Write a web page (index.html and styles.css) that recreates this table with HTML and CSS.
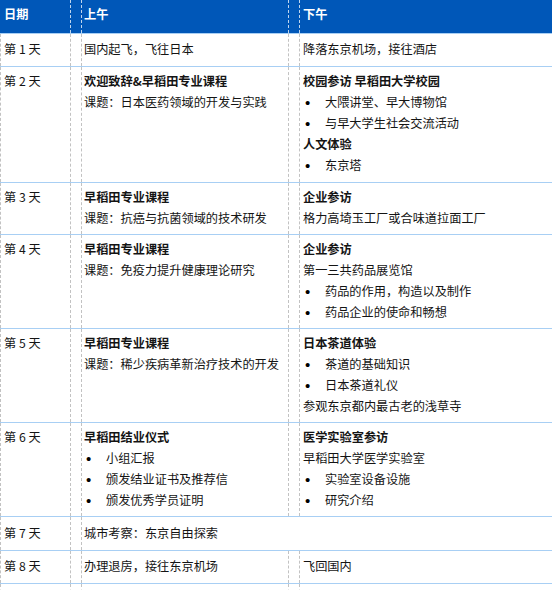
FILE: index.html
```html
<!DOCTYPE html>
<html lang="zh-CN">
<head>
<meta charset="utf-8">
<title>行程表</title>
<link rel="stylesheet" href="styles.css">
</head>
<body>
<div class="sheet">
  <div class="row head">
    <div class="c date">日期</div><div class="gap"></div><div class="c am">上午</div><div class="gap"></div><div class="c pm">下午</div>
  </div>

  <div class="row one">
    <div class="c date">第 1 天</div><div class="gap"></div>
    <div class="c am"><p>国内起飞，飞往日本</p></div><div class="gap"></div>
    <div class="c pm"><p>降落东京机场，接往酒店</p></div>
  </div>

  <div class="row">
    <div class="c date">第 2 天</div><div class="gap"></div>
    <div class="c am"><p class="t">欢迎致辞&amp;早稻田专业课程</p><p>课题：日本医药领域的开发与实践</p></div><div class="gap"></div>
    <div class="c pm">
      <p class="t">校园参访 早稻田大学校园</p>
      <ul><li>大隈讲堂、早大博物馆</li><li>与早大学生社会交流活动</li></ul>
      <p class="t">人文体验</p>
      <ul><li>东京塔</li></ul>
    </div>
  </div>

  <div class="row">
    <div class="c date">第 3 天</div><div class="gap"></div>
    <div class="c am"><p class="t">早稻田专业课程</p><p>课题：抗癌与抗菌领域的技术研发</p></div><div class="gap"></div>
    <div class="c pm"><p class="t">企业参访</p><p>格力高埼玉工厂或合味道拉面工厂</p></div>
  </div>

  <div class="row">
    <div class="c date">第 4 天</div><div class="gap"></div>
    <div class="c am"><p class="t">早稻田专业课程</p><p>课题：免疫力提升健康理论研究</p></div><div class="gap"></div>
    <div class="c pm">
      <p class="t">企业参访</p>
      <p>第一三共药品展览馆</p>
      <ul><li>药品的作用，构造以及制作</li><li>药品企业的使命和畅想</li></ul>
    </div>
  </div>

  <div class="row">
    <div class="c date">第 5 天</div><div class="gap"></div>
    <div class="c am"><p class="t">早稻田专业课程</p><p>课题：稀少疾病革新治疗技术的开发</p></div><div class="gap"></div>
    <div class="c pm">
      <p class="t">日本茶道体验</p>
      <ul><li>茶道的基础知识</li><li>日本茶道礼仪</li></ul>
      <p>参观东京都内最古老的浅草寺</p>
    </div>
  </div>

  <div class="row">
    <div class="c date">第 6 天</div><div class="gap"></div>
    <div class="c am">
      <p class="t">早稻田结业仪式</p>
      <ul><li>小组汇报</li><li>颁发结业证书及推荐信</li><li>颁发优秀学员证明</li></ul>
    </div><div class="gap"></div>
    <div class="c pm">
      <p class="t">医学实验室参访</p>
      <p>早稻田大学医学实验室</p>
      <ul><li>实验室设备设施</li><li>研究介绍</li></ul>
    </div>
  </div>

  <div class="row one">
    <div class="c date">第 7 天</div><div class="gap"></div>
    <div class="c am wide"><p>城市考察：东京自由探索</p></div>
  </div>

  <div class="row one">
    <div class="c date">第 8 天</div><div class="gap"></div>
    <div class="c am"><p>办理退房，接往东京机场</p></div><div class="gap"></div>
    <div class="c pm"><p>飞回国内</p></div>
  </div>

  <div class="row tail">
    <div class="c date"></div><div class="gap"></div><div class="c am"></div><div class="gap"></div><div class="c pm"></div>
  </div>
</div>
</body>
</html>
```

FILE: styles.css
```css
html, body {
  margin: 0;
  padding: 0;
  overflow: hidden;
  background: #ffffff;
}

body {
  font-family: "Noto Sans CJK SC", "Microsoft YaHei", sans-serif;
  font-size: 12.2px;
  line-height: 21px;
  color: #141414;
}

.sheet {
  width: 552px;
}

.row {
  display: grid;
  grid-template-columns: 70px 11px 207px 11px 1fr;
  border-bottom: 1px solid #a8cff4;
  min-height: 32.4px;
}

.c,
.gap {
  border-left: 1px dashed #c2c2c2;
  padding: 4px 0 5.2px;
}

.date {
  padding-left: 3px;
}

.am {
  padding-left: 2px;
}

.pm {
  padding-left: 3px;
}

.wide {
  grid-column: 3 / 6;
}

.one .c,
.one .gap {
  padding-top: 5.2px;
}

p {
  margin: 0;
}

.t {
  font-weight: 700;
}

ul {
  list-style: none;
  margin: 0;
  padding: 0;
}

li {
  display: flex;
}

li::before {
  content: "•";
  font-family: "Liberation Sans", sans-serif;
  font-size: 15px;
  color: #000000;
  width: 20px;
  padding-left: 2px;
  flex: none;
}

.head {
  background: #0057b8;
  min-height: 33px;
  color: #ffffff;
  font-weight: 700;
}

.head .c,
.head .gap {
  border-left-color: rgba(255, 255, 255, 0.75);
  padding-top: 4px;
}

.head .date {
  border-left-color: transparent;
}

.tail {
  border-bottom: none;
  min-height: 20px;
}
```
